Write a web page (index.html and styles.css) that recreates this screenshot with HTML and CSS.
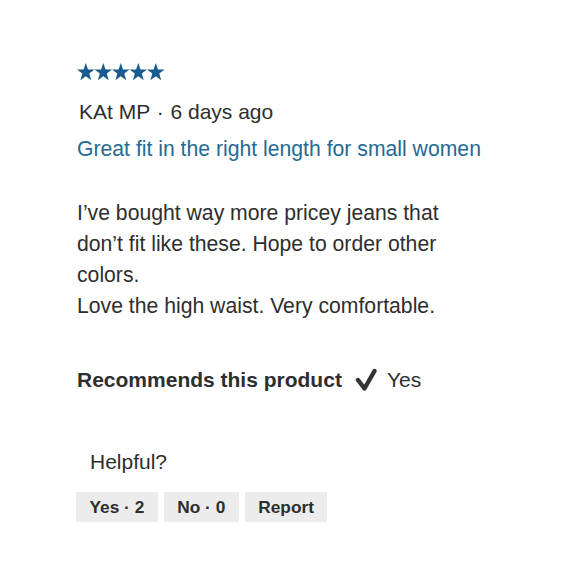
FILE: index.html
```html
<!DOCTYPE html>
<html>
<head>
<meta charset="utf-8">
<link rel="stylesheet" href="styles.css">
</head>
<body>
<div class="review">
  <div class="stars">
    <svg width="88" height="18" viewBox="0 0 88 18" aria-label="5 stars">
      <defs>
        <polygon id="st" points="8.8,0 11,6.4 17.6,6.5 12.3,10.6 14.2,17.2 8.8,13.2 3.4,17.2 5.3,10.6 0,6.5 6.6,6.4"/>
      </defs>
      <use href="#st" x="0"/>
      <use href="#st" x="17.5"/>
      <use href="#st" x="35"/>
      <use href="#st" x="52.5"/>
      <use href="#st" x="70"/>
    </svg>
  </div>
  <div class="meta">KAt MP <span class="dot">·</span> 6 days ago</div>
  <div class="title">Great fit in the right length for small women</div>
  <p class="body">I’ve bought way more pricey jeans that don’t fit like these. Hope to order other colors.<br>Love the high waist. Very comfortable.</p>
  <div class="recommend">
    <span class="rec-label">Recommends this product</span>
    <svg class="check" width="22" height="24" viewBox="0 0 22 24"><path d="M3 12 L9.5 20.5 L19.5 3" fill="none" stroke="#333" stroke-width="4.4" stroke-linejoin="round" stroke-linecap="round"/></svg>
    <span class="rec-yes">Yes</span>
  </div>
  <div class="helpful">Helpful?</div>
  <div class="buttons">
    <span class="btn">Yes · 2</span>
    <span class="btn">No · 0</span>
    <span class="btn">Report</span>
  </div>
</div>
</body>
</html>
```
FILE: styles.css
```css
html, body {
  margin: 0;
  padding: 0;
  background: #ffffff;
}
body {
  font-family: "Liberation Sans", Arial, sans-serif;
  color: #2e2e2e;
  width: 580px;
  height: 580px;
  overflow: hidden;
}
.review {
  padding: 63px 0 0 77px;
}
.stars {
  height: 18px;
  line-height: 0;
}
.stars svg {
  fill: #195b8f;
  display: block;
}
.meta {
  margin-top: 19px;
  font-size: 21px;
  line-height: 24px;
  padding-left: 2px;
}
.dot {
  padding: 0 1px;
}
.title {
  margin-top: 13px;
  font-size: 21.2px;
  line-height: 24px;
  color: #246a95;
}
.body {
  margin: 36px 0 0 0;
  width: 372px;
  font-size: 21.2px;
  line-height: 31px;
}
.recommend {
  margin-top: 46px;
  display: flex;
  align-items: center;
  height: 26px;
}
.rec-label {
  font-weight: bold;
  font-size: 21px;
}
.check {
  margin-left: 13px;
  margin-right: 10px;
}
.rec-yes {
  font-size: 21px;
}
.helpful {
  margin-top: 57px;
  padding-left: 13px;
  font-size: 21px;
  line-height: 24px;
}
.buttons {
  margin-top: 18px;
  margin-left: -1px;
  display: flex;
  gap: 6px;
}
.btn {
  background: #ececec;
  font-weight: bold;
  font-size: 17.3px;
  height: 30px;
  line-height: 30px;
  padding: 0 13.5px;
  color: #2e2e2e;
}
```
